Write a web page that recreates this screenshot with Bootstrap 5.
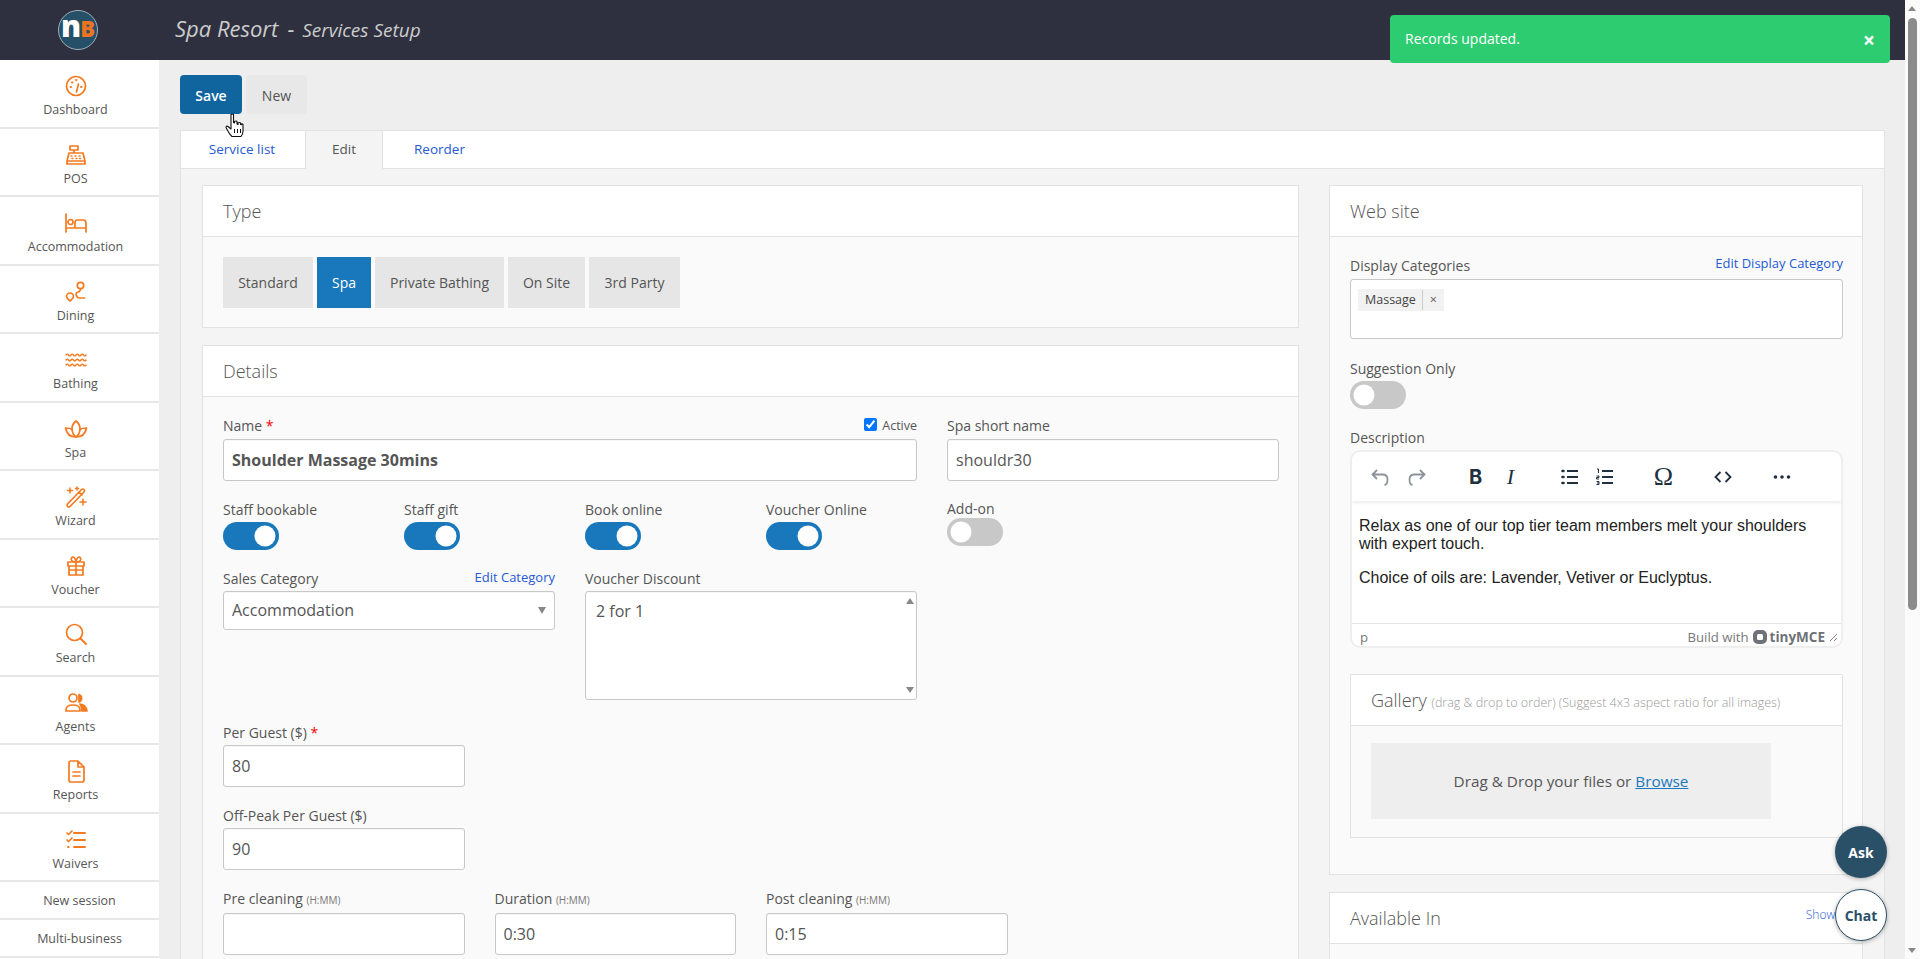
<!DOCTYPE html>
<html lang="en">
<head>
  <meta charset="UTF-8">
  <meta name="viewport" content="width=device-width, initial-scale=1.0">
  <title>Spa Resort - Services Setup</title>
  <link href="https://cdn.jsdelivr.net/npm/bootstrap@5.3.3/dist/css/bootstrap.min.css" rel="stylesheet">
  <style>
    html, body { height: 100%; overflow: hidden; }
    body { font-family: "Open Sans", sans-serif; font-size: 14px; color: #555; background: #eee; }
    a { color: #2659d3; text-decoration: none; }

    .shell { height: 100vh; }
    .shell-main { width: 1905px; }
    .scroll-strip { width: 15px; background: #fbfbfb; position: relative; }
    .scroll-strip i { position: absolute; left: 3px; width: 0; height: 0; border-left: 4.5px solid transparent; border-right: 4.5px solid transparent; }
    .scroll-up { top: 6px; border-bottom: 5px solid #888; }
    .scroll-down { bottom: 6px; border-top: 5px solid #888; }
    .scroll-thumb { position: absolute; top: 18px; left: 3px; width: 9px; height: 592px; background: #8b8b8b; border-radius: 5px; }

    .topbar { height: 60px; background: #2e303f; }
    .logo-wrap { width: 159px; padding-right: 3px; }
    .logo-disc { width: 40px; height: 40px; border-radius: 50%; background: #265068; border: 1px solid #9fb0ba; font-family: "Open Sans", sans-serif; font-weight: 800; line-height: 1; padding-bottom: 6px; }
    .logo-n { color: #fff; font-size: 30px; letter-spacing: -1px; }
    .logo-b { color: #ed7420; font-size: 22px; }
    .page-title { color: #ccc; font-style: italic; font-size: 22px; margin-left: 16px; margin-bottom: 3px; }
    .page-title small { font-size: 19px; font-weight: 400; }
    .title-dash { margin: 0 2px 0 3.5px; }

    .sidenav { width: 159px; background: #fff; flex-shrink: 0; }
    .sidenav a { color: #555; font-size: 12.5px; border-bottom: 2px solid #e8e6e8; display: block; }
    .side-item { height: 68.5px; padding: 14px 8px 0 0; text-align: center; }
    .side-item svg { display: block; width: 24px; height: 24px; margin: 0 auto 2px; fill: none; stroke: #f47a20; stroke-width: 1.7; stroke-linecap: round; stroke-linejoin: round; }
    .side-item span { line-height: 20px; }
    .side-small { height: 38px; line-height: 37px; text-align: center; }

    .content { padding: 15px 20px 0 21px; flex: 1; min-width: 0; position: relative; }
    .btn-save, .btn-save:hover { background: #11659f; color: #fff; font-weight: 600; width: 62px; height: 39px; font-size: 14px; padding: 1px 0 0; border: 0; border-radius: 4px; }
    .btn-new, .btn-new:hover { background: #e8e8e8; color: #555; width: 61px; height: 39px; font-size: 14px; padding: 1px 0 0; border: 0; border-radius: 4px; }
    .cursor-hand { position: absolute; left: 225px; top: 113px; width: 20px; height: 25px; }

    .tabstrip { margin-top: 16px; height: 39px; background: #fff; border: 1px solid #e2e2e2; }
    .tabstrip .nav-link { color: #2659d3; font-size: 13.5px; height: 38px; line-height: 37px; padding: 0; text-align: center; border-right: 1px solid #e2e2e2; border-radius: 0; }
    .tabstrip .nav-link.active { color: #555; background: #f4f4f4; height: 39px; }
    .tab-a { width: 125px; padding-right: 2px !important; }
    .tab-b { width: 77px; }
    .tab-c { width: 111px; padding-left: 2px !important; border-right: 0 !important; }

    .tab-body { background: #f4f4f4; border-left: 1px solid #e2e2e2; border-right: 1px solid #e2e2e2; padding: 16px 21px 0; height: 900px; }
    .page-cols { display: grid; grid-template-columns: 1097px 534px; column-gap: 30px; }

    .box { border: 1px solid #e2e2e2; border-radius: 0; background: #fafafa; margin-bottom: 17px; }
    .box > .card-header { height: 51px; background: #fff; border-bottom: 1px solid #e2e2e2; border-radius: 0; padding: 0 20px; font-size: 18px; font-weight: 300; line-height: 50px; color: #555; }
    .box > .card-body { padding: 17px 19px 0 20px; }

    .type-row { padding: 3px 0 19px; }
    .type-btn { background: #e6e6e6; color: #555; height: 51px; padding: 0; line-height: 51px; font-size: 14px; border: 0; border-radius: 0; }
    .type-btn:nth-child(1) { width: 90px; }
    .type-btn:nth-child(2) { width: 54px; }
    .type-btn:nth-child(3) { width: 129px; }
    .type-btn:nth-child(4) { width: 77px; }
    .type-btn:nth-child(5) { width: 91px; }
    .type-btn.on, .type-btn.on:hover { background: #1878bb; color: #fff; }

    .form-row { --bs-gutter-x: 30px; }
    .field { margin-bottom: 18px; }
    .field label, .field-label { display: block; line-height: 21px; margin-bottom: 2px; }
    .field-tall label { margin: 1px 0 3px; }
    .req { color: #f00; }
    .unit { font-size: 10px; color: #777; }
    .mini-link { font-size: 13px; line-height: 18px; }
    .form-control, .form-select { border: 1px solid #c8c8c8; border-radius: 3px; height: 42px; font-size: 16px; color: #555; padding: 0 8px; box-shadow: inset 0 1px 1px rgba(0,0,0,.04); }
    .name-input { font-weight: 700; }
    .form-select { height: 39px; padding-bottom: 2px; background-image: url("data:image/svg+xml,%3csvg xmlns='http://www.w3.org/2000/svg' viewBox='0 0 8 7'%3e%3cpath fill='%23888' d='M0 0h8L4 7z'/%3e%3c/svg%3e"); background-size: 8px 7px; background-position: right 8px center; }
    .active-check { font-size: 12.5px; line-height: 16px; margin-bottom: 5px; }
    .active-check input { margin: 0 5px 0 0; vertical-align: -1px; }

    .form-switch { padding-left: 0; margin: 0; min-height: 0; height: 28px; }
    .form-switch .form-check-input { width: 56px; height: 28px; margin: 0; border: 0; border-radius: 14px; background-color: #c8c8c8; box-shadow: none;
      --bs-form-switch-bg: url("data:image/svg+xml,%3csvg xmlns='http://www.w3.org/2000/svg' viewBox='-4 -4 8 8'%3e%3ccircle r='3' fill='%23fff'/%3e%3c/svg%3e"); background-image: var(--bs-form-switch-bg); }
    .form-switch .form-check-input:checked { background-color: #1878bb; }
    .addon-field { margin-top: -1px; }
    .addon-field label { margin-bottom: -1px; }
    .suggest-field { margin-bottom: 18px; margin-top: 19px; }

    .voucher-wrap { position: relative; }
    .voucher-wrap textarea { height: 109px; padding: 7px 10px; resize: none; }
    .voucher-wrap i { position: absolute; right: 3px; width: 0; height: 0; border-left: 4.5px solid transparent; border-right: 4.5px solid transparent; }
    .arrow-up { top: 7px; border-bottom: 6px solid #888; }
    .arrow-down { bottom: 7px; border-top: 6px solid #888; }
    .voucher-field { margin-bottom: 22px; }

    .tag-box { height: 60px; background: #fff; border: 1px solid #c8c8c8; border-radius: 3px; padding: 8px 7px; }
    .tag-chip { display: inline-flex; align-items: center; height: 22px; background: #f2f2f2; color: #444; font-size: 12.5px; padding: 0 7px; }
    .tag-chip b { font-weight: 400; border-left: 1px solid #ccc; margin-left: 6px; padding-left: 7px; line-height: 20px; color: #555; }

    .editor { height: 198px; border: 2px solid #eee; border-radius: 10px; background: #fff; overflow: hidden; margin-bottom: 26px; }
    .ed-bar { height: 49px; padding-left: 10px; box-shadow: 0 2px 3px rgba(0,0,0,.08); gap: 24px; position: relative; }
    .ed-group-first { gap: 2px; }
    .ed-btn { width: 35px; height: 34px; color: #222f3e; }
    .ed-btn svg { width: 24px; height: 24px; fill: none; stroke: currentColor; stroke-width: 1.8; }
    .ed-btn.off { color: #8c939b; }
    .ed-b { font: 700 20px/1 Inter, sans-serif; }
    .ed-i { font: italic 400 22px/1 "Liberation Serif", serif; }
    .ed-o { font: 400 26px/1 "Liberation Serif", serif; }
    .ed-text { height: 122px; padding: 16px 7px 0; font-family: "Liberation Sans", sans-serif; font-size: 16px; line-height: 18px; color: #222; overflow: hidden; }
    .ed-text p { margin-bottom: 16px; }
    .ed-status { height: 25px; border-top: 1px solid #e4e4e4; font-size: 13.2px; color: #777; padding: 3px 3px 0 8px; }
    .tiny-word { font: 700 13.5px/1 "Open Sans", sans-serif; color: #6d7278; margin-left: 3px; }
    .tiny-mark { width: 14px; height: 14px; margin-left: 4px; }
    .grip { width: 9px; height: 9px; margin-left: 4px; }

    .gallery { background: #fafafa; margin-bottom: 36px; }
    .gallery .card-body { padding: 17px 20px 18px; }
    .gallery-note { font-size: 12.5px; color: #999; }
    .drop-zone { width: 400px; height: 76px; background: #eee; color: #555; font-size: 15.3px; }
    .drop-zone a { color: #1878bb; text-decoration: underline; }

    .avail-link { font-size: 12px; margin: -6px -8px 0 0; }
    .avail-body { height: 200px; }

    .float-btn { position: absolute; width: 52px; height: 52px; left: 1835px; border-radius: 50%; font-weight: 700; font-size: 14px; box-shadow: 0 1px 4px rgba(0,0,0,.3); }
    .float-ask { top: 826px; background: #2a5068; color: #fff; }
    .float-chat { top: 889px; background: #fff; color: #2a5068; border: 1px solid #2a5068; }

    .toast-note { position: absolute; left: 1390px; top: 15px; width: 500px; height: 48px; background: #2ecc71; color: #fff; border-radius: 4px; padding: 0 15px 2px 15px; z-index: 5; }
    .toast-x { font-weight: 700; font-size: 21px; line-height: 1; margin-top: 4px; }
  </style>
</head>
<body>
  <div class="shell d-flex">
    <div class="shell-main d-flex flex-column">
      <!-- Top bar -->
      <header class="topbar d-flex align-items-center flex-shrink-0">
        <div class="logo-wrap d-flex justify-content-center">
          <div class="logo-disc d-flex align-items-baseline justify-content-center"><span class="logo-n">n</span><span class="logo-b">B</span></div>
        </div>
        <div class="page-title">Spa Resort <span class="title-dash">-</span> <small>Services Setup</small></div>
      </header>

      <div class="d-flex flex-grow-1 overflow-hidden">
        <!-- Side menu -->
        <nav class="sidenav">
          <a class="side-item" href="#"><svg viewBox="0 0 24 24"><circle cx="12" cy="12" r="9.5"/><path d="M12.5 18l2-8"/><path d="M6.500 13h.5M8 8.500h.5M12 6h.5M17 13h.5" stroke-width="2"/></svg><span>Dashboard</span></a>
          <a class="side-item" href="#"><svg viewBox="0 0 24 24"><path d="M6 3h8v4H6zM10 7v3M5 10h14l2 8v3H3v-3zM3 18h18"/><path d="M7 13h1M11 13h1M15 13h1M8 15.500h1M12 15.500h1M15.500 15.500h1" stroke-width="1.4"/></svg><span>POS</span></a>
          <a class="side-item" href="#"><svg viewBox="0 0 24 24"><path d="M2 3v18M2 17h20M22 21v-9q0-3-3-3h-6q-2 0-2 3v5"/><circle cx="6.500" cy="11" r="2.500"/></svg><span>Accommodation</span></a>
          <a class="side-item" href="#"><svg viewBox="0 0 24 24"><circle cx="16.500" cy="5.500" r="3.200"/><path d="M16.500 9c0 3-3 3-4 4s0 5 3 5h5"/><path d="M6 21c-2-2-3.500-3-3.500-4.500a3.500 3.500 0 0 1 7 0C9.500 18 8 19 6 21z"/></svg><span>Dining</span></a>
          <a class="side-item" href="#"><svg viewBox="0 0 24 24"><path stroke-width="1.400" d="M2 7q1.250-1.800 2.500 0t2.500 0 2.500 0 2.500 0 2.500 0 2.500 0 2.500 0 2.500 0M2 12q1.250-1.800 2.500 0t2.500 0 2.500 0 2.500 0 2.500 0 2.500 0 2.500 0 2.500 0M2 17q1.250-1.800 2.500 0t2.500 0 2.500 0 2.500 0 2.500 0 2.500 0 2.500 0 2.500 0"/></svg><span>Bathing</span></a>
          <a class="side-item" href="#"><svg viewBox="0 0 24 24"><path d="M12 4c3 2.500 4 5 4 7.500 0 4-2 7-4 8.500-2-1.500-4-4.500-4-8.500C8 9 9 6.500 12 4z"/><path d="M12 20c-6 0-9.500-3.500-10.500-9 2.500 0 5 .5 6.700 1.500M12 20c6 0 9.500-3.500 10.500-9-2.500 0-5 .5-6.700 1.500"/></svg><span>Spa</span></a>
          <a class="side-item" href="#"><svg viewBox="0 0 24 24"><path d="M3.500 19l14-14.500q1.500-1 2.500 0t0 2.500L6 21.500q-1.500 1-2.500 0t0-2.500zM15 7l3 3"/><path d="M6 3v5M3.500 5.500h5M13 2v3M11.500 3.500h3M19 14v6M16 17h6" stroke-width="1.500"/></svg><span>Wizard</span></a>
          <a class="side-item" href="#"><svg viewBox="0 0 24 24"><path d="M4 8h16v4H4zM5 12h14v9H5zM12 8v13M5 16h14"/><path d="M12 8C8 8 6.500 6 7.500 4s4-1 4.500 4c.5-5 3.500-6 4.500-4S16 8 12 8z"/></svg><span>Voucher</span></a>
          <a class="side-item" href="#"><svg viewBox="0 0 24 24"><circle cx="10.500" cy="10.500" r="8"/><path d="M16.500 16.500L22 22" stroke-width="2"/></svg><span>Search</span></a>
          <a class="side-item" href="#"><svg viewBox="0 0 24 24"><circle cx="9" cy="7" r="4"/><path d="M2 20v-1q0-5 7-5t7 5v1z"/><path d="M15 3.500a4 4 0 0 1 0 7.500zM16 13q6 .5 7 7h-5q0-4-2-7z" fill="#f47a20"/></svg><span>Agents</span></a>
          <a class="side-item" href="#"><svg viewBox="0 0 24 24"><path d="M5 4q0-2 2-2h7l6 6v13q0 2-2 2H7q-2 0-2-2zM14 2v6h6"/><path d="M9 13h7M9 17h7"/></svg><span>Reports</span></a>
          <a class="side-item" href="#"><svg viewBox="0 0 24 24"><path d="M10 5h11M10 12h11M10 19h11" stroke-width="2"/><path d="M3 5l1.500 1.500L8 3M3 12l1.500 1.500L8 10"/><path d="M4 19h.5" stroke-width="2.200"/></svg><span>Waivers</span></a>
          <a class="side-small" href="#">New session</a>
          <a class="side-small" href="#">Multi-business</a>
        </nav>

        <!-- Main -->
        <main class="content">
          <div class="d-flex gap-1">
            <button class="btn btn-save" type="button">Save</button>
            <button class="btn btn-new" type="button">New</button>
          </div>

          <ul class="nav tabstrip">
            <li class="nav-item"><a class="nav-link tab-a" href="#">Service list</a></li>
            <li class="nav-item"><a class="nav-link tab-b active" href="#">Edit</a></li>
            <li class="nav-item"><a class="nav-link tab-c" href="#">Reorder</a></li>
          </ul>

          <div class="tab-body">
            <div class="page-cols">
              <!-- Left column -->
              <div>
                <div class="card box">
                  <div class="card-header">Type</div>
                  <div class="card-body">
                    <div class="d-flex gap-1 type-row">
                      <button class="btn type-btn" type="button">Standard</button>
                      <button class="btn type-btn on" type="button">Spa</button>
                      <button class="btn type-btn" type="button">Private Bathing</button>
                      <button class="btn type-btn" type="button">On Site</button>
                      <button class="btn type-btn" type="button">3rd Party</button>
                    </div>
                  </div>
                </div>

                <div class="card box">
                  <div class="card-header">Details</div>
                  <div class="card-body">
                    <div class="row form-row">
                      <div class="col-8 field field-tall">
                        <div class="d-flex justify-content-between align-items-end">
                          <label>Name <span class="req">*</span></label>
                          <div class="active-check"><input type="checkbox" checked>Active</div>
                        </div>
                        <input class="form-control name-input" type="text" value="Shoulder Massage 30mins">
                      </div>
                      <div class="col-4 field field-tall">
                        <label>Spa short name</label>
                        <input class="form-control" type="text" value="shouldr30">
                      </div>
                    </div>

                    <div class="row form-row">
                      <div class="col-2 field"><label>Staff bookable</label><div class="form-check form-switch"><input class="form-check-input" type="checkbox" checked></div></div>
                      <div class="col-2 field"><label>Staff gift</label><div class="form-check form-switch"><input class="form-check-input" type="checkbox" checked></div></div>
                      <div class="col-2 field"><label>Book online</label><div class="form-check form-switch"><input class="form-check-input" type="checkbox" checked></div></div>
                      <div class="col-2 field"><label>Voucher Online</label><div class="form-check form-switch"><input class="form-check-input" type="checkbox" checked></div></div>
                      <div class="col-2 field addon-field"><label>Add-on</label><div class="form-check form-switch"><input class="form-check-input" type="checkbox"></div></div>
                    </div>

                    <div class="row form-row">
                      <div class="col-4">
                        <div class="d-flex justify-content-between">
                          <label class="field-label">Sales Category</label>
                          <a class="mini-link" href="#">Edit Category</a>
                        </div>
                        <select class="form-select"><option>Accommodation</option></select>
                      </div>
                      <div class="col-4 voucher-field">
                        <label class="field-label">Voucher Discount</label>
                        <div class="voucher-wrap">
                          <textarea class="form-control">2 for 1</textarea>
                          <i class="arrow-up"></i><i class="arrow-down"></i>
                        </div>
                      </div>
                    </div>

                    <div class="row form-row">
                      <div class="col-3 field"><label>Per Guest ($) <span class="req">*</span></label><input class="form-control" type="text" value="80"></div>
                    </div>
                    <div class="row form-row">
                      <div class="col-3 field"><label>Off-Peak Per Guest ($)</label><input class="form-control" type="text" value="90"></div>
                    </div>
                    <div class="row form-row">
                      <div class="col-3 field"><label>Pre cleaning <span class="unit">(H:MM)</span></label><input class="form-control" type="text"></div>
                      <div class="col-3 field"><label>Duration <span class="unit">(H:MM)</span></label><input class="form-control" type="text" value="0:30"></div>
                      <div class="col-3 field"><label>Post cleaning <span class="unit">(H:MM)</span></label><input class="form-control" type="text" value="0:15"></div>
                    </div>
                  </div>
                </div>
              </div>

              <!-- Right column -->
              <div>
                <div class="card box">
                  <div class="card-header">Web site</div>
                  <div class="card-body">
                    <div class="field-tall">
                      <div class="d-flex justify-content-between align-items-start">
                        <label class="field-label">Display Categories</label>
                        <a class="mini-link" href="#">Edit Display Category</a>
                      </div>
                      <div class="tag-box"><span class="tag-chip">Massage<b>×</b></span></div>
                    </div>
                    <div class="field suggest-field">
                      <label>Suggestion Only</label>
                      <div class="form-check form-switch"><input class="form-check-input" type="checkbox"></div>
                    </div>
                    <label class="field-label">Description</label>
                    <div class="editor">
                      <div class="ed-bar d-flex align-items-center">
                        <div class="ed-group-first d-flex">
                          <div class="ed-btn off d-flex align-items-center justify-content-center"><svg viewBox="0 0 24 24"><path d="M9 5L4.500 9.500 9 14M5 9.500h9.500q5 0 5 5t-3 5.500"/></svg></div>
                          <div class="ed-btn off d-flex align-items-center justify-content-center"><svg viewBox="0 0 24 24"><path d="M15 5l4.500 4.500L15 14M19 9.500H9.500q-5 0-5 5t3 5.500"/></svg></div>
                        </div>
                        <div class="d-flex">
                          <div class="ed-btn ed-b d-flex align-items-center justify-content-center">B</div>
                          <div class="ed-btn ed-i d-flex align-items-center justify-content-center">I</div>
                        </div>
                        <div class="d-flex">
                          <div class="ed-btn d-flex align-items-center justify-content-center"><svg viewBox="0 0 24 24"><path d="M9 6h11M9 12h11M9 18h11"/><path d="M4.500 6h1M4.500 12h1M4.500 18h1" stroke-width="2.600" stroke-linecap="round"/></svg></div>
                          <div class="ed-btn d-flex align-items-center justify-content-center"><svg viewBox="0 0 24 24"><path d="M9 6h11M9 12h11M9 18h11"/><path d="M4 4h1.500v4M3.500 11h2.500v1.500H3.500V14H6M3.500 16.500H6v3H3.500M4 18h2" stroke-width="1"/></svg></div>
                        </div>
                        <div class="d-flex"><div class="ed-btn ed-o d-flex align-items-center justify-content-center">Ω</div></div>
                        <div class="d-flex"><div class="ed-btn d-flex align-items-center justify-content-center"><svg viewBox="0 0 24 24"><path d="M9.500 7l-5 5 5 5M14.500 7l5 5-5 5"/></svg></div></div>
                        <div class="d-flex"><div class="ed-btn d-flex align-items-center justify-content-center"><svg viewBox="0 0 24 24"><circle cx="5.500" cy="12" r="1.800" fill="currentColor" stroke="none"/><circle cx="12" cy="12" r="1.800" fill="currentColor" stroke="none"/><circle cx="18.500" cy="12" r="1.800" fill="currentColor" stroke="none"/></svg></div></div>
                      </div>
                      <div class="ed-text">
                        <p>Relax as one of our top tier team members melt your shoulders with expert touch.</p>
                        <p>Choice of oils are: Lavender, Vetiver or Euclyptus.</p>
                      </div>
                      <div class="ed-status d-flex align-items-center justify-content-between">
                        <span>p</span>
                        <span class="d-flex align-items-center">Build with
                          <svg class="tiny-mark" viewBox="0 0 14 14"><rect width="14" height="14" rx="5" fill="#6d7278"/><rect x="4" y="4" width="6" height="6" rx="1.500" fill="#fff"/></svg>
                          <span class="tiny-word">tinyMCE</span>
                          <svg class="grip" viewBox="0 0 9 9"><path d="M8 1L1 8M8 5L5 8" stroke="#888" fill="none"/></svg>
                        </span>
                      </div>
                    </div>

                    <div class="card box gallery">
                      <div class="card-header">Gallery <span class="gallery-note">(drag &amp; drop to order) (Suggest 4x3 aspect ratio for all images)</span></div>
                      <div class="card-body">
                        <div class="drop-zone d-flex align-items-center justify-content-center"><span>Drag &amp; Drop your files or&nbsp;<a href="#">Browse</a></span></div>
                      </div>
                    </div>
                  </div>
                </div>

                <div class="card box">
                  <div class="card-header d-flex justify-content-between align-items-center">Available In <a class="avail-link" href="#">Show all</a></div>
                  <div class="card-body avail-body"></div>
                </div>
              </div>
            </div>
          </div>
        </main>
      </div>
    </div>

    <div class="scroll-strip flex-shrink-0">
      <i class="scroll-up"></i><div class="scroll-thumb"></div><i class="scroll-down"></i>
    </div>
  </div>

  <!-- Things floating over the page -->
  <svg class="cursor-hand" viewBox="0 0 20 25"><path d="M6 1.500q1.500-1 2.500 0v8l1 .5V8.500q1.500-1 2.500 0V11l1 .5V10q1.500-1 2.500 0v1.500l.8.3V11q1.200-.5 1.700.5V18q0 3-2 5.500H7q-2-1.500-3.500-4.500L1 14.500q0-2 2-1l3 2.500z" fill="#fff" stroke="#111" stroke-width="1.100" stroke-linejoin="round"/><path d="M9.500 16v4M12.500 16v4M15.500 16v4" stroke="#111" fill="none"/></svg>
  <div class="toast-note d-flex align-items-center justify-content-between"><span>Records updated.</span><span class="toast-x">×</span></div>
  <div class="float-btn float-ask d-flex align-items-center justify-content-center">Ask</div>
  <div class="float-btn float-chat d-flex align-items-center justify-content-center">Chat</div>

  <script src="https://cdn.jsdelivr.net/npm/bootstrap@5.3.3/dist/js/bootstrap.bundle.min.js"></script>
</body>
</html>
